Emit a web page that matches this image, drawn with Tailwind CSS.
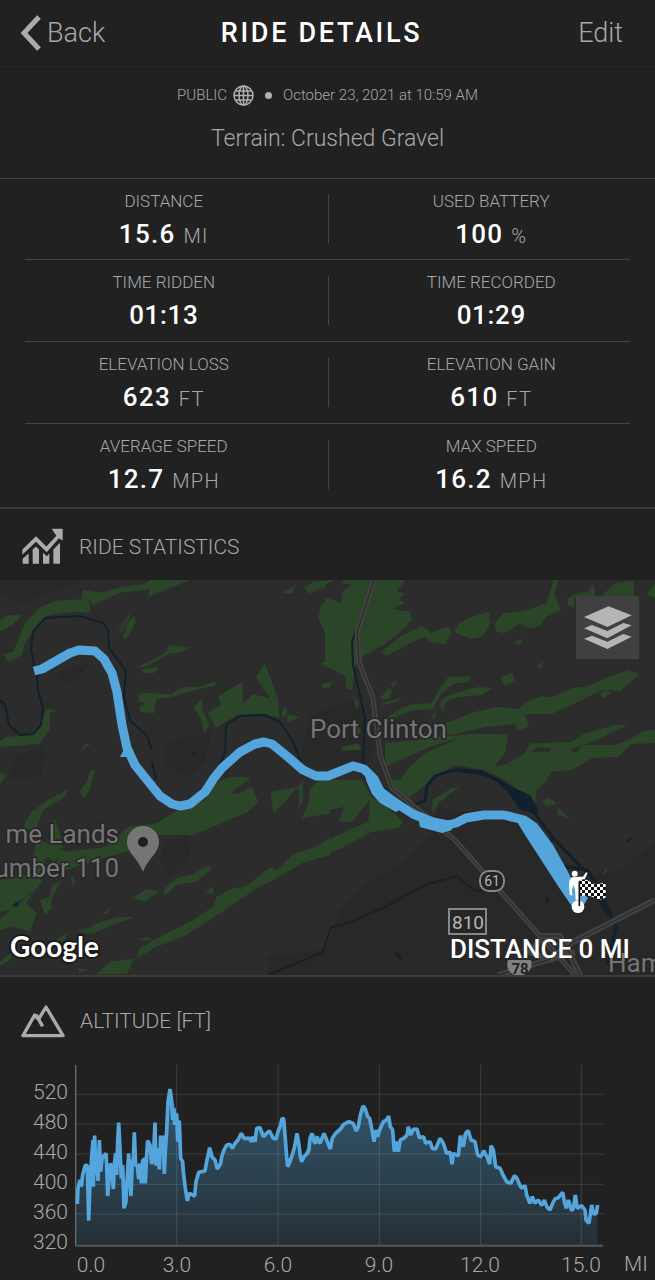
<!DOCTYPE html>
<html lang="en">
<head>
  <meta charset="UTF-8">
  <meta name="viewport" content="width=device-width, initial-scale=1.0">
  <title>Ride Details</title>
  <script src="https://cdn.jsdelivr.net/npm/@tailwindcss/browser@4"></script>
</head>

<body class="min-h-screen bg-[#212121] font-['Roboto','Liberation_Sans',sans-serif] font-light text-[#a8a8a8]">

  <!-- Top bar -->
  <header class="grid grid-cols-[1fr_auto_1fr] items-center h-[70px] pl-5 pr-8 pb-[3px] border-b border-[#191919]">
    <button type="button" class="justify-self-start flex items-center gap-1.5 text-[27px] leading-8">
      <svg class="w-[21px] h-9" viewBox="0 0 21 36" fill="none" stroke="#ababab" stroke-width="5"><path d="M19 2 4 18 19 34"/></svg>
      Back
    </button>
    <h1 class="text-[27px] leading-8 font-medium tracking-widest text-white">RIDE DETAILS</h1>
    <button type="button" class="justify-self-end text-[27px] leading-8">Edit</button>
  </header>

  <main>
    <!-- Visibility, date and terrain -->
    <section class="flex flex-col items-center gap-[17px] pt-[13px] pb-6 border-b border-[#454545]">
      <div class="flex items-center text-[15px] leading-6">
        <span>PUBLIC</span>
        <svg class="w-[21px] h-[21px] ml-1.5" viewBox="0 0 42 42" fill="none" stroke="#b0b0b0" stroke-width="3">
          <circle cx="21" cy="21" r="19"/>
          <ellipse cx="21" cy="21" rx="9" ry="19"/>
          <path d="M21 2v38M2 21h38M5 12h32M5 30h32"/>
        </svg>
        <span class="w-[7px] h-[7px] mx-[11px] rounded-full bg-[#b0b0b0]"></span>
        <span>October 23, 2021 at 10:59 AM</span>
      </div>
      <p class="text-[23px] leading-[30px]">Terrain: Crushed Gravel</p>
    </section>

    <!-- Ride numbers -->
    <section class="border-b-2 border-[#3a3a3a] text-center">
      <dl>
        <div class="relative grid grid-cols-2 pt-2.5 pb-2">
          <div class="flex flex-col gap-1">
            <dt class="text-[17px] leading-6">DISTANCE</dt>
            <dd class="text-[26px] leading-[34px] tracking-wider font-medium text-white">15.6 <span class="text-[20px] leading-none font-light text-[#a8a8a8]">MI</span></dd>
          </div>
          <div class="flex flex-col gap-1">
            <dt class="text-[17px] leading-6">USED BATTERY</dt>
            <dd class="text-[26px] leading-[34px] tracking-wider font-medium text-white">100 <span class="text-[20px] leading-none font-light text-[#a8a8a8]">%</span></dd>
          </div>
          <span class="absolute left-1/2 top-[15px] bottom-4 border-l border-[#454545]"></span>
        </div>
        <div class="mx-[25px] border-b border-[#454545]"></div>
        <div class="relative grid grid-cols-2 pt-2.5 pb-[9px]">
          <div class="flex flex-col gap-1">
            <dt class="text-[17px] leading-6">TIME RIDDEN</dt>
            <dd class="text-[26px] leading-[34px] tracking-wide font-medium text-white">01:13</dd>
          </div>
          <div class="flex flex-col gap-1">
            <dt class="text-[17px] leading-6">TIME RECORDED</dt>
            <dd class="text-[26px] leading-[34px] tracking-wide font-medium text-white">01:29</dd>
          </div>
          <span class="absolute left-1/2 top-4 bottom-4 border-l border-[#454545]"></span>
        </div>
        <div class="mx-[25px] border-b border-[#454545]"></div>
        <div class="relative grid grid-cols-2 pt-2.5 pb-[9px]">
          <div class="flex flex-col gap-1">
            <dt class="text-[17px] leading-6">ELEVATION LOSS</dt>
            <dd class="text-[26px] leading-[34px] tracking-wider font-medium text-white">623 <span class="text-[20px] leading-none font-light text-[#a8a8a8]">FT</span></dd>
          </div>
          <div class="flex flex-col gap-1">
            <dt class="text-[17px] leading-6">ELEVATION GAIN</dt>
            <dd class="text-[26px] leading-[34px] tracking-wider font-medium text-white">610 <span class="text-[20px] leading-none font-light text-[#a8a8a8]">FT</span></dd>
          </div>
          <span class="absolute left-1/2 top-4 bottom-4 border-l border-[#454545]"></span>
        </div>
        <div class="mx-[25px] border-b border-[#454545]"></div>
        <div class="relative grid grid-cols-2 pt-2.5 pb-[11px]">
          <div class="flex flex-col gap-1">
            <dt class="text-[17px] leading-6">AVERAGE SPEED</dt>
            <dd class="text-[26px] leading-[34px] tracking-wider font-medium text-white">12.7 <span class="text-[20px] leading-none font-light text-[#a8a8a8]">MPH</span></dd>
          </div>
          <div class="flex flex-col gap-1">
            <dt class="text-[17px] leading-6">MAX SPEED</dt>
            <dd class="text-[26px] leading-[34px] tracking-wider font-medium text-white">16.2 <span class="text-[20px] leading-none font-light text-[#a8a8a8]">MPH</span></dd>
          </div>
          <span class="absolute left-1/2 top-4 bottom-[18px] border-l border-[#454545]"></span>
        </div>
      </dl>
    </section>

    <!-- Map -->
    <section>
      <div class="flex items-center gap-4 h-[71px] pt-1 pl-[22px]">
        <svg class="w-[41px] h-[37px]" viewBox="21 8 123 110" fill="#ababab">
          <path d="M22 72 63 32 94 63 124 31 110 10H143V45L132 38 95 80 63 49 22 88Z"/>
          <path d="M23 100 41 84V115H23ZM53 72 63 63 72 72V115H53ZM84 82 95 92 103 84V115H84ZM115 72 135 52V115H115Z"/>
        </svg>
        <h2 class="text-[21px] leading-8">RIDE STATISTICS</h2>
      </div>

      <div class="relative border-b-2 border-[#3c3c3c]">
        <svg class="block w-full h-auto" viewBox="0 0 655 395" font-family="Roboto, 'Liberation Sans', sans-serif">
          <defs>
            <pattern id="checks" width="18" height="18" patternUnits="userSpaceOnUse">
              <path fill="#111" d="M0 0h18v18H0z"/>
              <path fill="#fff" d="M0 0h9v9H0zM9 9h9v9H9z"/>
            </pattern>
          </defs>
          <path fill="#2c2c2c" d="M0 0h655v395H0z"/>

          <!-- Built-up and shaded ground -->
          <g fill="#282828">
            <path d="M0 12 20 24 80 2 60 0H0ZM60 90 88 84 78 100 68 104 58 98ZM165 162 212 152 205 182 190 196 165 186ZM15 176 45 165 42 195 10 200ZM165 262 188 256 190 275 168 296 160 280Z"/>
            <path d="M268 376 325 370 340 330 370 300 400 285 430 255 440 228 520 242 560 300 620 290 655 262V395H268Z"/>
            <path d="M310 135 355 120 375 150 370 180 320 190 300 180Z"/>
          </g>

          <!-- Woodland -->
          <g fill="#2b4529">
            <g transform="scale(.33333)">
              <path d="M10 222 40 215 60 165 75 130 120 82 165 62 245 58 248 30 300 38 370 20 435 12 450 0 570 0 445 50 448 28 360 38 280 75 265 55 272 97 200 97 140 108 100 150 75 190 65 225 25 245Z"/>
              <path d="M0 120 25 105 68 104 30 140 0 152ZM352 155 392 95 385 125 400 108 408 125 378 180 368 170 385 130 360 160ZM405 265 445 245 500 215 505 195 572 203 540 218 510 220 440 260ZM425 268 477 260 465 278 430 280ZM415 345 430 338 515 343 550 320 600 320 645 304 648 316 550 340 520 350 470 358 462 400 420 395 418 378 440 370 415 365Z"/>
              <path d="M580 382 605 355 608 390 628 435 612 462 605 420ZM622 400 662 375 655 348 728 305 728 370 760 342 810 355 768 292 795 250 820 320 835 360 838 413 770 400 710 405 648 444ZM845 400 855 378 862 395 850 415ZM862 405 900 410 862 430ZM848 38 887 15 875 40ZM912 22 940 5 990 0V30L960 25 925 42ZM990 48 962 78 955 115 972 150 985 190 990 240 958 252 990 265ZM963 315 990 306V322L968 325Z"/>
              <path d="M0 485 15 472 70 465 105 455 128 420 138 385 170 392 150 400 150 445 120 490 60 497 0 500ZM243 512 255 492 272 493ZM262 600 270 575 285 568 278 600ZM0 578 20 585 10 600H0ZM660 600 700 590 750 592 745 600Z"/>
            </g>
            <g transform="translate(325 0) scale(.33333)">
              <path d="M0 0H240L215 35 238 40 220 60 240 70 200 88 255 95 262 120 215 165 175 195 105 235 90 260 82 330 64 325 62 290 20 265 0 258V50L50 70V35L80 15Z"/>
              <path d="M168 215 200 190 230 168 290 137 318 158 372 138 380 160 360 193 318 186 300 172 270 182 185 228ZM388 150 405 128 440 110 492 95 495 135 472 170 440 176 400 165ZM508 130 535 100 600 92 665 68 685 0H700L688 45 708 90 665 110 640 140 610 145 585 130 540 160 515 155ZM728 55 750 42 790 35 805 12 812 48 750 50 745 85 728 75ZM838 40 870 10 925 0 928 48H838ZM965 45 990 10V52ZM562 186 592 178 585 196ZM525 295 562 275 568 302 540 317 530 302ZM632 258 655 245 648 268Z"/>
              <path d="M165 355 190 325 202 330 190 358ZM195 310 218 302 205 320ZM165 372 235 350 215 365 175 375ZM185 412 230 385 262 373 320 370 345 325 370 290 437 288 430 305 385 312 350 340 322 388 260 392 195 418ZM345 370 365 348 420 330 465 320 500 325 470 345 400 352 362 365 352 400Z"/>
              <path d="M350 435 400 415 440 398 520 380 580 388 600 370 650 348 680 352 740 325 790 318 850 290 910 270 942 282 888 332 845 330 858 338 835 355 825 345 840 325 770 360 680 402 600 403 612 440 575 452 572 432 480 442 400 460 345 470Z"/>
              <path d="M180 490 200 488 350 470 440 462 550 463 540 520 510 558 540 555 600 520 615 490 735 487 780 460 870 435 908 435 840 468 780 495 870 495 910 480 950 455 990 448V490L920 492 880 530 800 535 740 570 680 575 665 600H540L485 572 390 555 320 600H185L180 545Z"/>
              <path d="M50 500 100 490 110 510 50 512ZM95 430 108 450 95 480ZM85 345 102 370 95 395ZM0 310 25 305 0 325ZM318 412 335 388 330 418Z"/>
            </g>
            <g transform="translate(0 200) scale(.33333)">
              <path d="M70 140 90 100 140 62 205 28 195 50 130 90 110 140 115 165ZM240 35 262 0H275L270 30 252 55ZM0 0H10L0 15Z"/>
              <path d="M150 170 165 115 180 160 190 205 155 210ZM200 215 320 200 385 140 470 130 555 75 610 65 650 10 660 0H745L690 40 715 42 755 20 775 65 745 95 640 140 580 165 480 165 380 215 290 240 200 270 110 210 120 180Z"/>
              <path d="M812 35 895 20 820 102ZM895 20 908 0 910 60 898 85ZM905 115 925 70 930 25 960 0H990V100ZM865 238 880 222 950 200 990 172V225L905 250 820 300 770 325 660 400 560 465 470 500 400 540 380 583H290L330 545 410 535 420 505 490 465 570 425 640 380 650 350 700 325 740 318 810 262 830 270Z"/>
              <path d="M490 350 495 325 530 295 580 282 620 258 640 262 590 305 530 315ZM400 352 440 328 480 332 435 365ZM615 340 638 320 640 340ZM245 460 290 430 350 412 405 410 350 430 280 460ZM307 400 335 380 320 403ZM408 480 440 472 460 482ZM235 450 265 443 245 458ZM235 565 265 570 238 580ZM120 360 150 350 155 315 185 300 155 355 155 385 135 405ZM215 285 228 300 215 320Z"/>
              <path d="M0 300 110 280 130 310 90 350 80 370 110 400 90 455 40 440 0 450V410L30 390 0 395ZM110 180 140 230 110 300 100 230ZM130 500 200 460 195 480 150 500ZM0 545 50 505 30 540 0 558Z"/>
            </g>
            <g transform="translate(325 200) scale(.33333)">
              <path d="M0 0H110L140 50 180 75 235 125 220 145 140 155 50 205 0 225V185L60 155 130 125 135 60 80 125 40 125 60 80 0 92ZM185 0H320L250 55ZM322 60 370 30 405 18 340 70 322 105ZM540 0H670L635 30 632 65 590 40ZM650 65 672 52 695 72 665 78ZM695 80 735 115 700 105ZM835 275 848 260 840 285Z"/>
            </g>
          </g>
          <g fill="#2c2c2c" transform="translate(325 0) scale(.33333)">
            <path d="M620 515 635 502 680 505 670 515ZM735 510 775 492 755 518ZM0 35 60 0H25L0 15Z"/>
            <path d="M225 600 250 565 300 520 400 475 330 495 180 560 185 600Z"/>
          </g>

          <!-- Creeks and the river -->
          <g fill="none" stroke="#11202d" stroke-width="2" stroke-linejoin="round">
            <path d="M35 90 31 68 33 52 45 38 80 36 103 43 108 50 109 68 126 91 124 118 130 140 147 156 152 170M152 182 156 200M37 95 38 110 43 128 41 145 33 154 20 155 9 145 5 125 0 120M218 190 225 172 226 145 240 136 265 135 280 142 292 160 301 181"/>
            <path d="M367 20 352 62 353 85 365 138 363 182 380 205"/>
          </g>
          <path fill="none" stroke="#11202d" stroke-width="3" d="m385 208 10 14 22 2 8-4 2-14 8-10 18-6 30 4 14 6"/>
          <path fill="#11202d" d="m455 188 26 2 16 8 14 8 20 10 8 16-4 2-16-5-12-18-14-13-14-6-24-1Z"/>
          <path fill="none" stroke="#11202d" stroke-width="3" d="m530 227 24 32 25 26 16 16 12 26 9 20-9 38M552 258l-3 8M563 286l24 4 8 11"/>
          <path fill="#11202d" d="m596 305 8 10 8 22-6-3-10-18ZM626 260l6-3-4 5ZM395 371l5 3 2 6-5-2ZM545 317l5 3-3 4ZM12 325l9-5-4 7ZM192 173l4-1-1 3Z"/>
          <g fill="none" stroke="#242b2a">
            <path d="M100 65 80 55 55 68M465 96l40-12 40-12 38-10M200 0 145 22 118 52M0 338l38-30 20-30M410 275l95-18 50-9M384 345l-59 8"/>
          </g>

          <!-- Roads -->
          <path fill="none" stroke="#1f1f1f" stroke-width="2" d="m268 395 55-23 8-25 20-5 34-15 40-22 32-9 18 15 12-1"/>
          <g fill="none" stroke-linejoin="round">
            <path stroke="#424242" stroke-width="5" d="M374 0 357 52 359 82 373 118 380 175 392 208 455 260 540 356 575 395"/>
            <path stroke="#252525" d="M374 0 357 52 359 82 373 118 380 175 392 208 455 260 540 356 575 395"/>
            <path stroke="#404040" stroke-width="6" d="m655 320-82 42-25 18-50 15M540 356l20 0 10 18 10 21M540 360l-10 12 20 8 25-8"/>
            <path stroke="#252525" d="m655 320-82 42-25 18-50 15M540 356l20 0 10 18 10 21"/>
          </g>

          <!-- Ride track -->
          <path fill="none" stroke="#53a5dc" stroke-width="9" stroke-linejoin="round" d="m34 91 8-2 28-16 9-3 16 1 9 8 8 14 5 19 5 33 5 23 8 17 12 15 13 16 12 8 8 2 10-2 15-12 9-14 8-10 18-16 15-8 9-2 8 2 16 13 15 13 13 6 12 0 10-4 15-6 11 3 10 10 6 12 13 10 20 13 20 8 15 3 8-2 10-5 18-3 20 0 20 5 10 7 15 20 15 27 16 31"/>
          <path fill="#53a5dc" d="m364 186 14 13 9 16 16 13-7 4-16-9-8-9-6-14ZM516 240l0-3 9-1 13 15 20 32 14 20 16 15-9 15-4-2-17-25-20-31-13-20ZM120 177l4-8 8 8ZM418 236l8 4 16 2 8-2 2 10-10 3-22-6Z"/>

          <!-- Place pin -->
          <path fill="#757575" d="M143 246c-9 0-16 7-16 16 0 11 11 16 16 30 5-14 16-19 16-30 0-9-7-16-16-16Z"/>
          <circle cx="143" cy="262" r="5" fill="#1f1f1f"/>

          <!-- Map labels -->
          <g fill="#757575" stroke="#262626" stroke-width="3" paint-order="stroke" font-size="26" font-weight="400">
            <text x="310" y="158">Port Clinton</text>
            <text x="119" y="263" text-anchor="end">me Lands</text>
            <text x="119" y="297" text-anchor="end">umber 110</text>
            <text x="608" y="392">Ham</text>
          </g>
          <g font-weight="400" text-anchor="middle">
            <rect x="480" y="291" width="24" height="20" rx="9" fill="#232323" stroke="#888" stroke-width="2"/>
            <text x="492" y="306" font-size="14" fill="#b5b5b5">61</text>
            <rect x="449" y="329" width="37" height="25" fill="#262626" stroke="#888" stroke-width="2"/>
            <text x="468" y="349" font-size="19" fill="#b5b5b5">810</text>
            <path fill="#808080" d="M508 380h23c2 8-2 12-7 15h-10c-6-4-8-8-6-15Z"/>
            <text x="520" y="394" font-size="15" font-weight="700" fill="#222">78</text>
          </g>
          <text x="10" y="377" font-family="Lato, sans-serif" font-size="28" font-weight="700" fill="#fff" stroke="#1b1b1b" stroke-width="4" paint-order="stroke">Google</text>
          <text x="450" y="378" font-size="26" font-weight="500" fill="#fff">DISTANCE 0 MI</text>

          <!-- Rider and finish flag -->
          <g transform="translate(555 280) scale(.33333)">
            <circle cx="59" cy="41" r="9" fill="#fff"/>
            <path fill="#fff" d="M50 52 72 50 84 50 93 37 98 39 89 58 74 61 73 80 72 120H62L60 88 55 75 51 90 52 107 44 104 42 80 43 62Z"/>
            <circle cx="69" cy="140" r="19" fill="#fff"/>
            <path fill="url(#checks)" d="M74 62Q90 54 106 66T152 66V112Q138 124 120 114T76 108Z"/>
            <path stroke="#111" stroke-width="5" d="M73 64v74"/>
          </g>
        </svg>

        <button type="button" aria-label="Map layers" class="absolute top-4 right-4 flex items-center justify-center w-[63px] h-[63px] bg-[#404040]">
          <svg class="w-12 h-[43px]" viewBox="776 77 144 129" fill="#b5b5b5">
            <path d="M850 78 919 105 846 140 776 110Z"/>
            <path d="M776 144 800 134 846 152 894 128 919 135 846 174ZM776 175 800 166 846 184 894 161 919 169 846 206Z"/>
          </svg>
        </button>
      </div>
    </section>

    <!-- Altitude chart -->
    <section>
      <div class="flex items-center gap-[15px] h-[88px] pl-[21px]">
        <svg class="w-11 h-[34px]" viewBox="62 88 132 102" fill="none" stroke="#ababab" stroke-width="10" stroke-linejoin="round">
          <path d="M113 133 103 121 68 183H188L137 97 114 135M107 120 127 155"/>
        </svg>
        <h2 class="text-[21px] leading-8">ALTITUDE [FT]</h2>
      </div>
      <svg class="block w-full h-auto" viewBox="0 1065 655 215" font-family="Roboto, 'Liberation Sans', sans-serif">
        <defs>
          <linearGradient id="fill" x1="0" y1="340" x2="0" y2="811" gradientUnits="userSpaceOnUse">
            <stop offset="0" stop-color="#32586f"/>
            <stop offset="1" stop-color="#252f35"/>
          </linearGradient>
          <path id="alt" d="M232 687 234 640 240 615 244 635 248 600 256 570 262 572 266 737 270 630 275 545 279 495 280 635 284 482 288 600 290 530 294 618 298 495 302 590 306 550 318 535 320 570 323 663 328 600 332 565 336 600 340 642 344 560 347 535 350 600 353 500 356 443 360 520 364 610 368 570 372 700 378 680 382 600 386 535 389 600 393 663 397 560 400 550 403 472 407 570 412 575 416 612 420 565 424 625 428 553 431 625 433 548 436 625 440 540 443 497 450 510 455 567 460 550 465 443 468 572 473 520 478 583 482 482 487 540 489 482 493 597 496 530 500 470 504 380 510 342 514 370 518 435 522 400 524 450 530 415 533 500 538 437 542 550 548 560 550 590 556 640 562 677 568 655 584 663 588 620 596 592 615 588 620 560 629 518 636 545 645 555 652 582 662 565 665 545 672 525 680 510 690 508 697 520 705 505 714 495 724 475 732 490 748 490 755 500 758 485 765 500 770 460 780 458 790 485 800 475 808 468 820 490 828 492 834 470 842 450 846 430 851 432 855 480 860 545 863 575 870 560 880 530 885 510 891 475 897 510 901 545 905 560 912 545 922 535 927 525 930 490 936 475 942 500 947 505 950 485 960 505 966 490 972 475 980 495 991 522 997 490 1007 475 1023 460 1031 448 1047 440 1059 445 1069 468 1075 455 1081 420 1089 393 1095 400 1103 425 1109 430 1115 460 1122 500 1128 465 1133 485 1140 462 1150 440 1160 435 1166 423 1171 455 1178 465 1183 530 1189 500 1195 530 1201 495 1211 490 1221 480 1225 455 1232 480 1240 463 1251 462 1258 488 1271 485 1277 505 1290 500 1297 520 1307 522 1320 490 1330 505 1340 535 1351 532 1356 568 1360 535 1375 543 1381 482 1390 515 1397 475 1405 467 1413 495 1425 500 1433 540 1443 545 1451 527 1460 545 1469 567 1473 512 1480 525 1487 575 1500 580 1509 600 1520 620 1533 625 1543 602 1551 610 1557 625 1565 640 1575 632 1580 660 1590 685 1597 665 1605 685 1615 675 1625 692 1633 675 1640 695 1650 705 1658 685 1665 672 1675 668 1688 652 1693 680 1699 700 1705 675 1715 707 1720 700 1726 660 1732 700 1745 692 1755 705 1758 735 1767 745 1775 690 1781 718 1789 715 1793 690"/>
          <clipPath id="under">
            <path d="M227 687 232 687 240 615 256 572 266 700 275 545 284 482 290 600 298 520 320 550 323 663 347 545 356 460 372 690 386 560 393 650 403 490 416 600 436 610 443 510 460 550 482 500 493 590 510 342 538 440 542 550 562 677 584 663 596 592 615 588 629 518 652 582 680 510 697 520 724 475 755 500 770 460 828 492 846 430 863 575 891 475 905 560 936 475 980 495 991 522 997 490 1031 448 1059 445 1069 468 1089 393 1109 430 1122 500 1140 462 1166 423 1178 465 1183 530 1221 480 1251 462 1277 505 1307 522 1320 490 1340 535 1375 543 1381 482 1405 467 1433 540 1469 560 1473 512 1487 575 1520 620 1543 602 1565 640 1590 685 1650 705 1688 652 1715 707 1745 692 1767 745 1793 690 1793 811 227 811Z"/>
          </clipPath>
        </defs>
        <g transform="translate(0 975) scale(.33333)" fill="none">
          <path fill="url(#fill)" clip-path="url(#under)" d="M227 330h1566v481H227z"/>
          <path stroke="#fff" stroke-opacity=".13" stroke-width="3" d="M227 358H1809M227 447H1809M227 537H1809M227 628H1809M227 717H1809M530 270V811M834 270V811M1138 270V811M1442 270V811M1744 270V811"/>
          <path stroke="#6a6e70" stroke-width="4" d="M227 270V813"/>
          <path stroke="#50565a" stroke-width="6" d="M227 812H1809"/>
          <use href="#alt" stroke="#53a5dc" stroke-width="11" stroke-linejoin="bevel"/>
        </g>
        <g fill="#a8a8a8" font-size="21" font-weight="300">
          <g text-anchor="end">
            <text x="68" y="1099">520</text>
            <text x="68" y="1129">480</text>
            <text x="68" y="1159">440</text>
            <text x="68" y="1189">400</text>
            <text x="68" y="1219">360</text>
            <text x="68" y="1249">320</text>
          </g>
          <g text-anchor="middle">
            <text x="91" y="1272">0.0</text>
            <text x="177" y="1272">3.0</text>
            <text x="278" y="1272">6.0</text>
            <text x="379" y="1272">9.0</text>
            <text x="480" y="1272">12.0</text>
            <text x="581" y="1272">15.0</text>
            <text x="636" y="1271">MI</text>
          </g>
        </g>
      </svg>
    </section>
  </main>

</body>
</html>
